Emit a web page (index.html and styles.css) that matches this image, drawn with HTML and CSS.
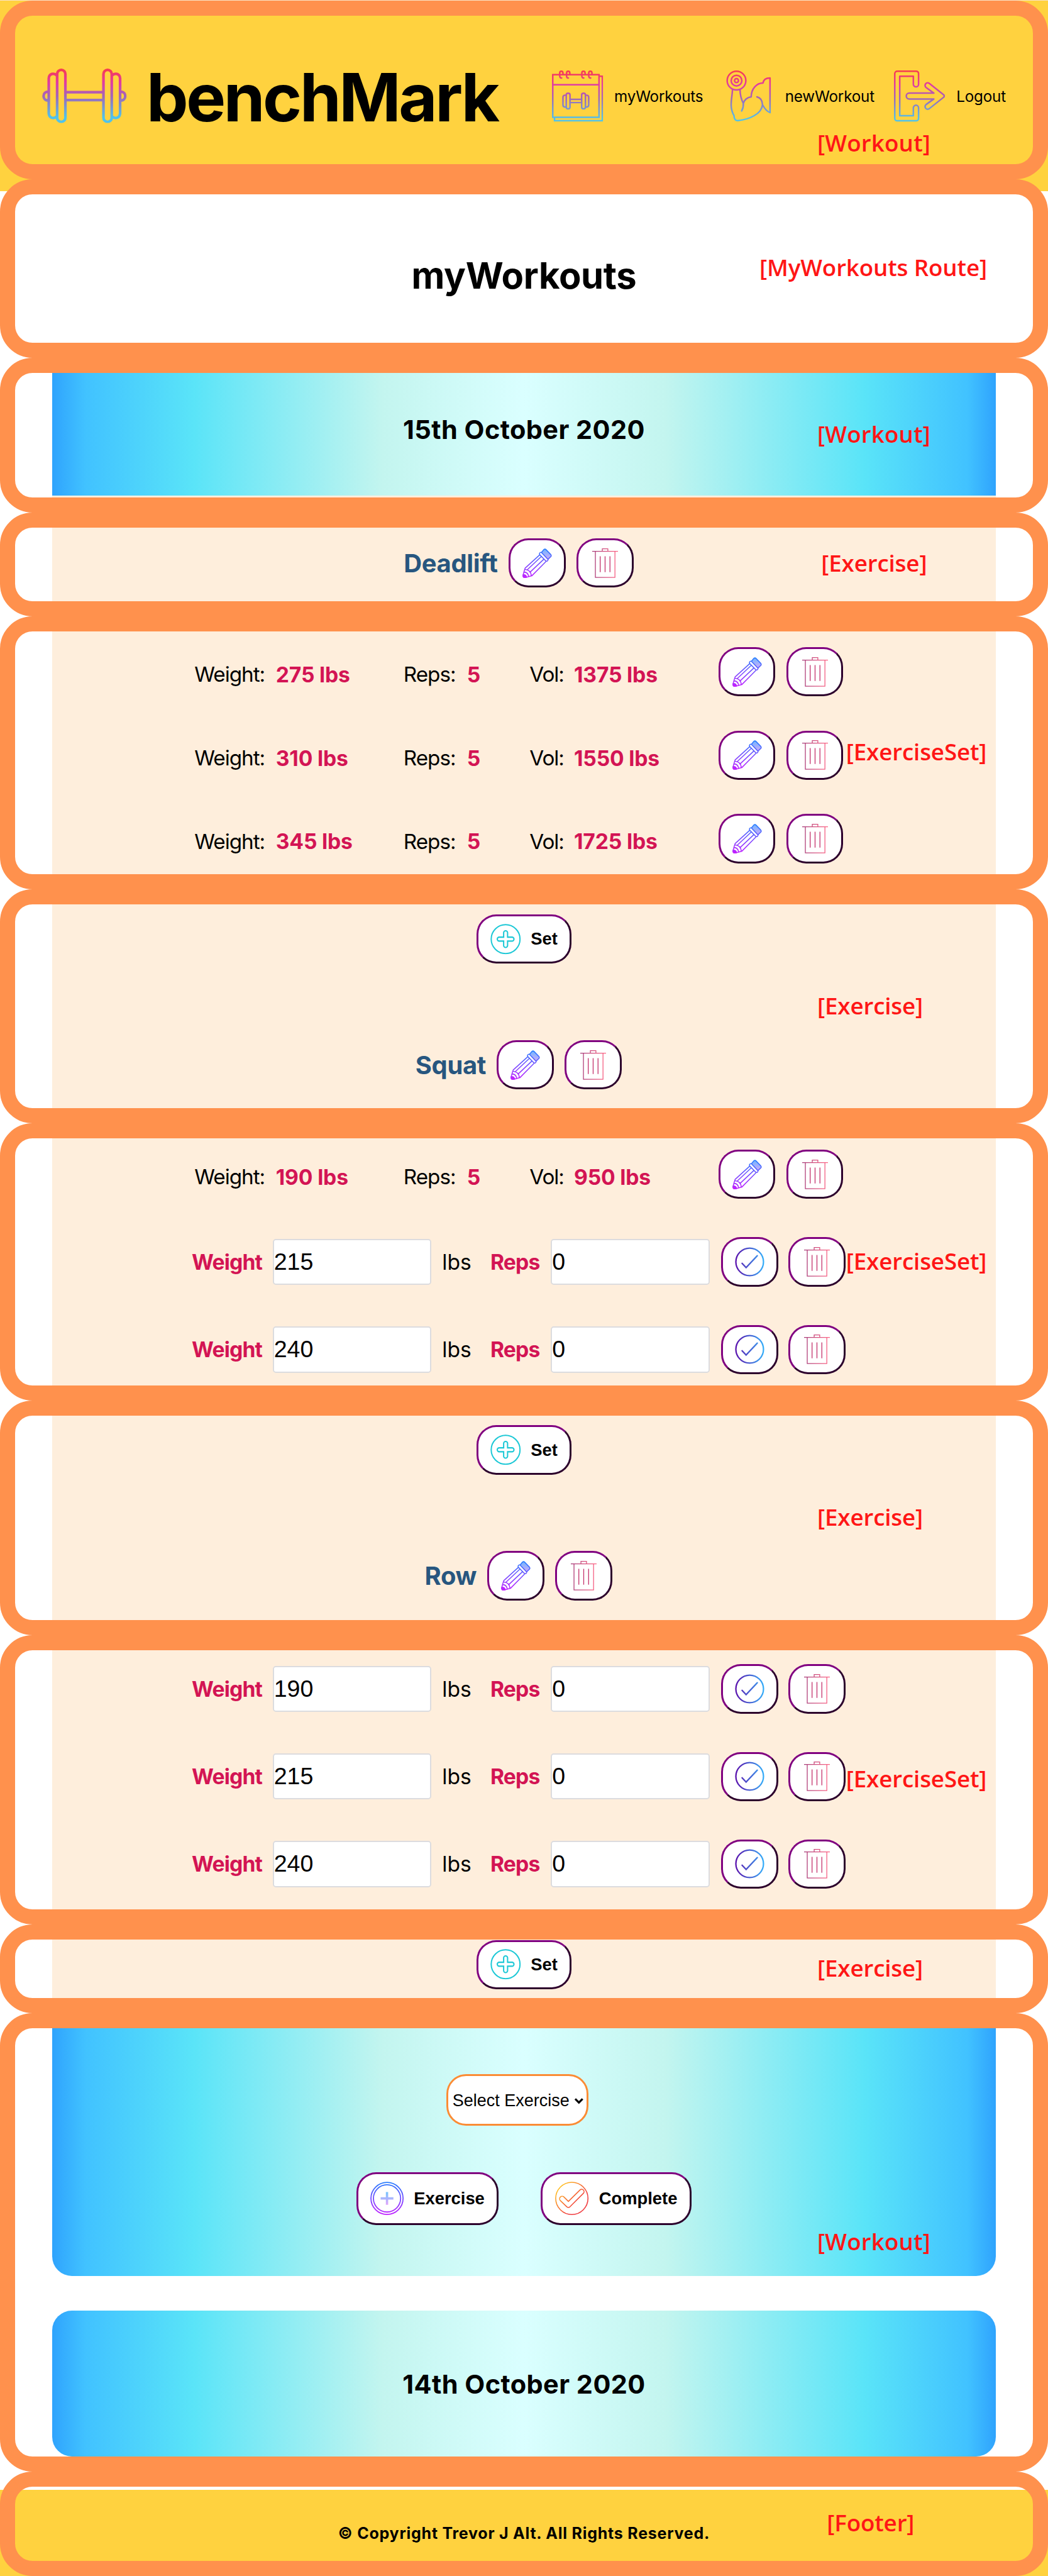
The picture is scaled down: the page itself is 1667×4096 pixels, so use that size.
FILE: index.html
```html
<!DOCTYPE html>
<html lang="en">
<head>
<meta charset="utf-8">
<title>benchMark</title>
<link rel="stylesheet" href="styles.css">
</head>
<body>
<svg class="sprite" aria-hidden="true">
  <defs>
    <linearGradient id="g-cal" gradientUnits="userSpaceOnUse" x1="0" y1="129" x2="0" y2="441"><stop offset="0" stop-color="#f83c4c"/><stop offset=".28" stop-color="#e03ba4"/><stop offset=".55" stop-color="#a068b8"/><stop offset=".95" stop-color="#50c3ea"/></linearGradient>
    <linearGradient id="g-out" gradientUnits="userSpaceOnUse" x1="0" y1="0" x2="0" y2="104"><stop offset="0" stop-color="#f83c4c"/><stop offset=".28" stop-color="#e03ba4"/><stop offset=".55" stop-color="#a068b8"/><stop offset=".95" stop-color="#50c3ea"/></linearGradient>
    <linearGradient id="g-pen" gradientUnits="userSpaceOnUse" x1="0" y1="102" x2="0" y2="283"><stop offset="0" stop-color="#2680ff"/><stop offset="1" stop-color="#c41fff"/></linearGradient>
    <linearGradient id="g-eraser" gradientUnits="userSpaceOnUse" x1="0" y1="104" x2="0" y2="172"><stop offset="0" stop-color="#6cb8ff"/><stop offset="1" stop-color="#d4a8f8"/></linearGradient>
    <linearGradient id="g-bin" gradientUnits="userSpaceOnUse" x1="551" y1="0" x2="709" y2="0"><stop offset="0" stop-color="#a63a78"/><stop offset="1" stop-color="#ff6585"/></linearGradient>
    <linearGradient id="g-tick" gradientUnits="userSpaceOnUse" x1="-30" y1="0" x2="30" y2="0"><stop offset="0" stop-color="#5a10ac"/><stop offset="1" stop-color="#36b0fa"/></linearGradient>
    <linearGradient id="g-add" gradientUnits="userSpaceOnUse" x1="0" y1="-102" x2="0" y2="102"><stop offset="0" stop-color="#2680ff"/><stop offset="1" stop-color="#c41fff"/></linearGradient>
    <linearGradient id="g-plus" gradientUnits="userSpaceOnUse" x1="0" y1="-39" x2="0" y2="39"><stop offset="0" stop-color="#72c6ff"/><stop offset="1" stop-color="#e2a4fb"/></linearGradient>
    <linearGradient id="g-done" gradientUnits="userSpaceOnUse" x1="1260" y1="130" x2="1410" y2="275"><stop offset="0" stop-color="#ffc41f"/><stop offset=".75" stop-color="#f03c40"/></linearGradient>
  </defs>
  <symbol id="i-logo" viewBox="0 0 172 111">
    <g fill="none" stroke="url(#g-out)" stroke-width="5.4">
      <rect x="30.5" y="2.7" width="16.8" height="105.6" rx="8.4"/>
      <rect x="124.7" y="2.7" width="16.8" height="105.6" rx="8.4"/>
      <path d="M30 14C24 8 14 10 13.500 20V91C14 101 24 103 30 97M142 14C148 8 158 10 158.500 20V91C158 101 148 103 142 97M48 48H124M48 64H124M12 47C0 47 0 65 12 65M160 47C172 47 172 65 160 65"/>
    </g>
  </symbol>
  <symbol id="i-calendar" viewBox="66 129 312 312">
    <g fill="none" stroke="url(#g-cal)" stroke-width="9.500" stroke-linecap="round">
      <path d="M70.800 154.500H353V414.500H70.800ZM71 216.500H353M353 164.500H373.200V436H81.500V415" stroke-linecap="butt"/>
      <path d="M125 175C116 176 113 169 113 160V146C113 130 133 130 133 146V151M166 175C157 176 155 169 155 160V146C155 130 175 130 175 146V151M260 175C251 176 248 169 248 160V146C248 130 268 130 268 146V151M302 175C293 176 290 169 290 160V146C290 130 310 130 310 146V151"/>
      <rect x="153" y="268" width="23" height="95" rx="11"/>
      <rect x="247" y="268" width="23" height="95" rx="11"/>
      <path d="M152 280H146Q133 280 133 293V339Q133 352 146 352H152M271 280H277Q290 280 290 293V339Q290 352 277 352H271M177 305.500H246M177 325H246"/>
    </g>
  </symbol>
  <symbol id="i-arm" viewBox="1110 129 312 312">
    <g fill="none" stroke="url(#g-cal)" stroke-width="9.500" stroke-linecap="round" stroke-linejoin="round">
      <circle cx="1192.500" cy="191" r="57"/><circle cx="1192.500" cy="191" r="32.500"/><circle cx="1192.500" cy="191" r="12"/>
      <path d="M1168 245C1166 300 1146 350 1177 404C1178 424 1186 437 1202 435C1270 428 1345 395 1351 338C1350 312 1338 295 1317 290M1351 338C1362 358 1378 380 1397 386V175C1375 175 1357 184 1354 206C1315 206 1283 240 1282 290C1258 292 1238 310 1234 330C1236 350 1230 365 1224 376M1214 245C1214 280 1224 310 1234 330"/>
    </g>
  </symbol>
  <symbol id="i-logout" viewBox="0 0 104 104">
    <path fill="none" stroke="url(#g-out)" stroke-width="3.200" stroke-linejoin="round" d="M50 6V28A5.300 5.300 0 0 1 39.400 28V11.700H11.700V92H39.400V76A5.300 5.300 0 0 1 50 76V97.500A5 5 0 0 1 45 102.400H6.600A5 5 0 0 1 1.600 97.500V6.500A5 5 0 0 1 6.600 1.600H45A5 5 0 0 1 50 6ZM81 46H31A6 6 0 0 0 31 58H81L65 69.500A5.300 5.300 0 0 0 72 77.500L101 54.500A3.600 3.600 0 0 0 101 49.500L72 26.500A5.300 5.300 0 0 0 65 34.500Z"/>
  </symbol>
  <symbol id="i-pencil" viewBox="126 102 180 181">
    <g fill="none" stroke="url(#g-pen)" stroke-width="6" stroke-linejoin="round" stroke-linecap="round">
      <path fill="url(#g-eraser)" d="M242 127L257 109Q264 103 271 110L298 138Q305 146 300 152L282 169Z"/>
      <path d="M240 126Q227 128 231 140L269 179Q280 184 283 170M231 142L142 223Q130 258 129 272Q131 282 144 280L183 270L270 182M242 151L156 232M258 167L172 248M142 231Q176 234 180 268M136 247Q159 248 164 274"/>
      <path fill="url(#g-pen)" d="M130 263Q147 262 151 278L138 281Q127 279 130 263Z"/>
    </g>
  </symbol>
  <symbol id="i-bin" viewBox="540 102 180 181">
    <path fill="none" stroke="url(#g-bin)" stroke-width="5" d="M551 119.500H709M613 119V104.500H647V119M570.500 120V280H690.500V120"/>
    <path fill="none" stroke="#c4316c" stroke-width="5" d="M600 150V248M630 150V248M660 150V248"/>
  </symbol>
  <symbol id="i-tick" viewBox="-31 -31 62 62">
    <g fill="none" stroke="url(#g-tick)" stroke-width="3"><circle r="29"/><path d="M-16 3L-7.500 12L16-13" stroke-linecap="round"/></g>
  </symbol>
  <symbol id="i-set" viewBox="-31 -31 62 62">
    <g fill="none" stroke="#1cc8d6" stroke-width="2.600"><circle r="29.300"/><path d="M-4-13A4 4 0 0 1 4-13V-4H13A4 4 0 0 1 13 4H4V13A4 4 0 0 1-4 13V4H-13A4 4 0 0 1-13-4H-4Z"/></g>
  </symbol>
  <symbol id="i-add" viewBox="-102 -102 204 204">
    <g fill="none" stroke="url(#g-add)" stroke-width="7"><circle r="98"/><circle r="83"/></g>
    <path fill="url(#g-plus)" d="M-7-39H7V-7H39V7H7V39H-7V7H-39V-7H-7Z"/>
  </symbol>
  <symbol id="i-done" viewBox="1239 98.500 204 204">
    <g fill="none" stroke="url(#g-done)" stroke-width="6"><circle cx="1341" cy="200.500" r="98.500"/><path d="M1293 192L1320 219L1391 149A14.500 14.500 0 0 1 1411 170L1329 252Q1320 259 1311 252L1271 214A14.500 14.500 0 0 1 1293 192Z"/></g>
  </symbol>
</svg>

<main class="page">
  <header class="panel panel-header">
    <div class="bar">
      <svg class="logo"><use href="#i-logo"/></svg>
      <h1 class="brand">benchMark</h1>
      <nav class="nav">
        <a class="nav-item"><svg class="nav-icon"><use href="#i-calendar"/></svg>myWorkouts</a>
        <a class="nav-item"><svg class="nav-icon"><use href="#i-arm"/></svg>newWorkout</a>
        <a class="nav-item"><svg class="nav-icon"><use href="#i-logout"/></svg>Logout</a>
      </nav>
    </div>
    <span class="note">[Workout]</span>
  </header>

  <section class="panel panel-route">
    <h2 class="title">myWorkouts</h2>
    <span class="note">[MyWorkouts Route]</span>
  </section>

  <section class="panel panel-day">
    <div class="stripe"><div class="day day-open"><h3 class="date">15th October 2020</h3></div></div>
    <span class="note">[Workout]</span>
  </section>

  <section class="panel panel-deadlift">
    <div class="stripe">
      <div class="exercise"><h4 class="name">Deadlift</h4><button class="btn"><svg class="icon"><use href="#i-pencil"/></svg></button><button class="btn"><svg class="icon"><use href="#i-bin"/></svg></button></div>
    </div>
    <span class="note">[Exercise]</span>
  </section>

  <section class="panel panel-deadlift-sets">
    <div class="stripe sets">
      <div class="set"><span>Weight:</span><b>275 lbs</b><span>Reps:</span><b>5</b><span>Vol:</span><b>1375 lbs</b><button class="btn"><svg class="icon"><use href="#i-pencil"/></svg></button><button class="btn"><svg class="icon"><use href="#i-bin"/></svg></button></div>
      <div class="set"><span>Weight:</span><b>310 lbs</b><span>Reps:</span><b>5</b><span>Vol:</span><b>1550 lbs</b><button class="btn"><svg class="icon"><use href="#i-pencil"/></svg></button><button class="btn"><svg class="icon"><use href="#i-bin"/></svg></button></div>
      <div class="set"><span>Weight:</span><b>345 lbs</b><span>Reps:</span><b>5</b><span>Vol:</span><b>1725 lbs</b><button class="btn"><svg class="icon"><use href="#i-pencil"/></svg></button><button class="btn"><svg class="icon"><use href="#i-bin"/></svg></button></div>
    </div>
    <span class="note">[ExerciseSet]</span>
  </section>

  <section class="panel panel-squat">
    <div class="stripe">
      <button class="btn btn-set"><svg class="icon"><use href="#i-set"/></svg>Set</button>
      <div class="exercise"><h4 class="name">Squat</h4><button class="btn"><svg class="icon"><use href="#i-pencil"/></svg></button><button class="btn"><svg class="icon"><use href="#i-bin"/></svg></button></div>
    </div>
    <span class="note">[Exercise]</span>
  </section>

  <section class="panel panel-squat-sets">
    <div class="stripe sets">
      <div class="set"><span>Weight:</span><b>190 lbs</b><span>Reps:</span><b>5</b><span>Vol:</span><b>950 lbs</b><button class="btn"><svg class="icon"><use href="#i-pencil"/></svg></button><button class="btn"><svg class="icon"><use href="#i-bin"/></svg></button></div>
      <div class="set set-edit"><b>Weight</b><input class="field" value="215"><span>lbs</span><b>Reps</b><input class="field" value="0"><button class="btn"><svg class="icon"><use href="#i-tick"/></svg></button><button class="btn"><svg class="icon"><use href="#i-bin"/></svg></button></div>
      <div class="set set-edit"><b>Weight</b><input class="field" value="240"><span>lbs</span><b>Reps</b><input class="field" value="0"><button class="btn"><svg class="icon"><use href="#i-tick"/></svg></button><button class="btn"><svg class="icon"><use href="#i-bin"/></svg></button></div>
    </div>
    <span class="note">[ExerciseSet]</span>
  </section>

  <section class="panel panel-row">
    <div class="stripe">
      <button class="btn btn-set"><svg class="icon"><use href="#i-set"/></svg>Set</button>
      <div class="exercise"><h4 class="name">Row</h4><button class="btn"><svg class="icon"><use href="#i-pencil"/></svg></button><button class="btn"><svg class="icon"><use href="#i-bin"/></svg></button></div>
    </div>
    <span class="note">[Exercise]</span>
  </section>

  <section class="panel panel-row-sets">
    <div class="stripe sets">
      <div class="set set-edit"><b>Weight</b><input class="field" value="190"><span>lbs</span><b>Reps</b><input class="field" value="0"><button class="btn"><svg class="icon"><use href="#i-tick"/></svg></button><button class="btn"><svg class="icon"><use href="#i-bin"/></svg></button></div>
      <div class="set set-edit"><b>Weight</b><input class="field" value="215"><span>lbs</span><b>Reps</b><input class="field" value="0"><button class="btn"><svg class="icon"><use href="#i-tick"/></svg></button><button class="btn"><svg class="icon"><use href="#i-bin"/></svg></button></div>
      <div class="set set-edit"><b>Weight</b><input class="field" value="240"><span>lbs</span><b>Reps</b><input class="field" value="0"><button class="btn"><svg class="icon"><use href="#i-tick"/></svg></button><button class="btn"><svg class="icon"><use href="#i-bin"/></svg></button></div>
    </div>
    <span class="note">[ExerciseSet]</span>
  </section>

  <section class="panel panel-add-set">
    <div class="stripe">
      <button class="btn btn-set"><svg class="icon"><use href="#i-set"/></svg>Set</button>
    </div>
    <span class="note">[Exercise]</span>
  </section>

  <section class="panel panel-actions">
    <div class="days">
      <div class="day day-actions">
        <div class="picker">Select Exercise<svg class="chevron" viewBox="0 0 20 14"><path d="M2.500 3L10 10.500L17.500 3"/></svg></div>
        <div class="actions">
          <button class="btn btn-wide"><svg class="icon"><use href="#i-add"/></svg>Exercise</button>
          <button class="btn btn-wide"><svg class="icon"><use href="#i-done"/></svg>Complete</button>
        </div>
      </div>
      <div class="day day-closed"><h3 class="date">14th October 2020</h3></div>
    </div>
    <span class="note">[Workout]</span>
  </section>

  <footer class="panel panel-footer">
    <p class="copyright">© Copyright Trevor J Alt. All Rights Reserved.</p>
    <span class="note">[Footer]</span>
  </footer>
</main>
</body>
</html>
```
FILE: styles.css
```css
/* all lengths are in rem; 21.3rem spans the page width */
html { font-size: 78.26px; }
* { box-sizing: border-box; }
body {
  margin: 0;
  font-family: Inter, "Liberation Sans", sans-serif;
  color: #000;
  background: #fff;
}
h1, h2, h3, h4, p { margin: 0; }
svg { display: block; overflow: visible; }
.sprite { position: absolute; width: 0; height: 0; }

.page {
  height: 4096px;
  overflow: hidden;
  border-top: 1px solid #fae3c4;
  background: linear-gradient(#ffd23f 0 3.87rem, #fff 3.87rem 50.58rem, #ffd23f 50.58rem);
}

/* outlined component frames */
.panel {
  position: relative;
  border: .31rem solid #ff914d;
  border-radius: .66rem;
}
.panel-header { height: 3.63rem; }
.panel-route { height: 3.625rem; }
.panel-day { height: 3.145rem; }
.panel-deadlift { height: 2.105rem; }
.panel-deadlift-sets { height: 5.545rem; }
.panel-squat { height: 4.765rem; }
.panel-squat-sets { height: 5.63rem; }
.panel-row { height: 4.77rem; }
.panel-row-sets { height: 5.87rem; }
.panel-add-set { height: 1.805rem; }
.panel-actions { height: 9.315rem; }
.panel-footer { height: 2.12rem; }

.note {
  position: absolute;
  font: 600 .47rem/1 "Open Sans", sans-serif;
  letter-spacing: -.002rem;
  color: #ff1616;
  white-space: nowrap;
}
.panel-header .note { left: 16.305rem; top: 2.35rem; letter-spacing: .002rem; }
.panel-route .note { left: 15.13rem; top: 1.25rem; }
.panel-day .note { left: 16.305rem; top: 1.015rem; letter-spacing: .002rem; }
.panel-deadlift .note { left: 16.385rem; top: .49rem; }
.panel-deadlift-sets .note { left: 16.89rem; top: 2.21rem; }
.panel-squat .note { left: 16.305rem; top: 1.83rem; }
.panel-squat-sets .note { left: 16.89rem; top: 2.255rem; }
.panel-row .note { left: 16.305rem; top: 1.825rem; }
.panel-row-sets .note { left: 16.89rem; top: 2.37rem; }
.panel-add-set .note { left: 16.305rem; top: .35rem; }
.panel-actions .note { left: 16.305rem; top: 4.1rem; letter-spacing: .002rem; }
.panel-footer .note { left: 16.5rem; top: .5rem; }

/* header */
.bar {
  display: flex;
  align-items: center;
  height: 100%;
  padding: .25rem .55rem 0 .55rem;
}
.logo { width: 1.72rem; height: 1.11rem; margin-right: .4rem; }
.brand { font-size: 1.35rem; line-height: 1; letter-spacing: -.043rem; padding-top: .06rem; }
.nav { display: flex; gap: .4rem; margin-left: auto; }
.nav-item {
  display: flex;
  align-items: center;
  gap: .225rem;
  font-size: .31rem;
  letter-spacing: -.0025rem;
}
.nav-icon { width: 1.04rem; height: 1.04rem; }

.title { padding-top: 1.29rem; font-size: .74rem; line-height: 1; letter-spacing: -.004rem; text-align: center; }

/* workout body */
.stripe { height: 100%; margin: 0 .75rem; background: #feeedc; }
.day {
  background: linear-gradient(90deg, #2fa3fd 0, #41c2ff 3.5%, #5ae4f8 15%, #c3f5ef 35%, #daffff 50%, #c3f5ef 65%, #5ae4f8 86%, #41c2ff 97%, #2fa3fd 100%);
}
.day-open { height: 2.49rem; padding-top: .88rem; }
.date { font-size: .53rem; line-height: .54rem; letter-spacing: .0055rem; text-align: center; }

.btn {
  display: flex;
  align-items: center;
  justify-content: center;
  width: 1.16rem;
  height: 1rem;
  padding: 0;
  border: .045rem solid;
  border-color: #800080 #2c002c #2c002c #800080;
  border-radius: .4rem;
  background: #fff;
  color: #000;
  font: 700 .35rem/1 "Liberation Sans", sans-serif;
}
.icon { width: .6rem; height: .6rem; flex: none; }

.exercise {
  display: flex;
  align-items: center;
  justify-content: center;
  gap: .22rem;
  padding-right: .22rem;
}
.name { padding-top: .02rem; font-size: .51rem; line-height: 1; letter-spacing: -.004rem; color: #27567f; }
.panel-deadlift .stripe { padding-top: .22rem; }
.panel-squat .stripe { padding-top: .21rem; }
.panel-row .stripe { padding-top: .195rem; }
.panel-add-set .stripe { padding-top: .01rem; }
.btn-set { width: 1.94rem; gap: .2rem; margin: 0 auto; }
.btn-set .icon { width: .62rem; height: .62rem; }
.btn-set + .exercise { margin-top: 1.555rem; }

.sets { display: flex; flex-direction: column; gap: .78rem; font-size: .43rem; line-height: 1; }
.panel-deadlift-sets .sets { gap: .695rem; padding-top: .325rem; }
.panel-squat-sets .sets { padding-top: .225rem; }
.panel-row-sets .sets { padding-top: .28rem; }
.set {
  display: grid;
  grid-template-columns: 1.655rem 2.595rem 1.29rem 1.27rem .905rem 2.935rem 1.38rem 1.16rem;
  align-items: center;
  height: 1rem;
  padding-left: 2.895rem;
}
.set b { color: #d31454; }
.set:not(.set-edit) > span, .set:not(.set-edit) > b { padding-top: .12rem; white-space: nowrap; }
.set:not(.set-edit) > span { font-size: .425rem; letter-spacing: -.013rem; }
.set:not(.set-edit) > b { letter-spacing: -.002rem; }
.set-edit { grid-template-columns: 1.645rem 3.445rem .98rem 1.23rem 3.46rem 1.37rem 1.16rem; padding-left: 2.84rem; }
.set-edit b { letter-spacing: -.01rem; }
.field {
  width: 3.23rem;
  height: .94rem;
  padding: 0;
  border: .026rem solid #dcdcdf;
  border-radius: .06rem;
  background: #fff;
  color: #000;
  font: 400 .48rem/1 "Liberation Sans", sans-serif;
}

/* exercise picker and previous day */
.days { display: flex; flex-direction: column; gap: .7rem; margin: 0 .75rem; }
.day-actions {
  display: flex;
  flex-direction: column;
  align-items: center;
  gap: .935rem;
  height: 5.04rem;
  padding-top: .935rem;
  border-radius: 0 0 .4rem .4rem;
}
.picker {
  display: flex;
  align-items: center;
  justify-content: center;
  gap: .09rem;
  width: 2.88rem;
  height: 1.05rem;
  padding: .02rem 0 0 .03rem;
  margin-right: .27rem;
  border: .045rem solid #fb8c35;
  border-radius: .4rem;
  background: #fff;
  font: 400 .345rem/1 "Liberation Sans", sans-serif;
}
.chevron { width: .2rem; height: .14rem; fill: none; stroke: #000; stroke-width: 4; }
.actions { display: flex; gap: .86rem; }
.btn-wide { width: 2.89rem; height: 1.08rem; gap: .21rem; }
.btn-wide + .btn-wide { width: 3.07rem; }
.btn-wide .icon { width: .68rem; height: .68rem; }
.day-closed { height: 2.96rem; padding-top: 1.22rem; border-radius: .4rem; }

.copyright {
  padding-top: .79rem;
  font-size: .32rem;
  font-weight: 700;
  line-height: 1;
  letter-spacing: .0095rem;
  text-align: center;
}
```
